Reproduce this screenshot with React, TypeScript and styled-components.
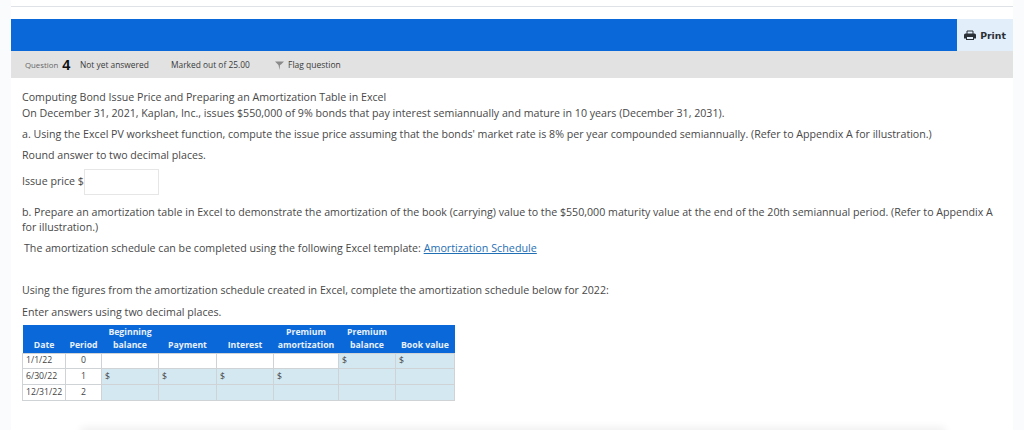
import styled, { createGlobalStyle } from 'styled-components';

const GlobalStyle = createGlobalStyle`
  html, body {
    margin: 0;
    padding: 0;
    height: 430px;
    overflow: hidden;
    background: #fafbfc;
    font-family: "Open Sans", "Liberation Sans", sans-serif;
    color: #484848;
  }
`;

const Page = styled.div`
  position: relative;
  width: 1002px;
  height: 430px;
  margin-left: 11px;
  background: #fff;
  overflow: hidden;
`;

const TopRule = styled.div`
  height: 6px;
  border-bottom: 1px solid #dfe2e6;
  margin-bottom: 12px;
`;

const HeaderBar = styled.div`
  display: flex;
  height: 32px;
`;

const BlueFill = styled.div`
  flex: 1;
  background: #0a68d8;
`;

const PrintButton = styled.div`
  width: 56px;
  display: flex;
  align-items: center;
  justify-content: center;
  gap: 4px;
  background: #e2eefa;
  color: #2b2f36;
  font-family: "DejaVu Sans", sans-serif;
  font-size: 9.3px;
  font-weight: 700;
`;

const InfoBar = styled.div`
  display: flex;
  align-items: center;
  height: 27px;
  background: #e2e2e2;
  padding-left: 14px;
  font-size: 8.4px;
  color: #3a3a3a;
`;

const QuestionLabel = styled.span`
  color: #666;
  width: 55px;
  font-size: 7.8px;
  display: flex;
  align-items: center;
  gap: 4px;
`;

const QuestionNumber = styled.b`
  font-family: "Liberation Sans", sans-serif;
  font-size: 14.5px;
  color: #111;
`;

const InfoItem = styled.span<{ $width: number }>`
  width: ${(p) => p.$width}px;
`;

const FlagItem = styled.span`
  display: flex;
  align-items: center;
  gap: 4px;
  font-size: 8.5px;
`;

const Content = styled.div`
  padding: 12px 16px 0 11px;
  font-size: 10.65px;
  line-height: 15.5px;
`;

const Para = styled.div<{ $mb?: number; $indent?: number }>`
  margin-bottom: ${(p) => p.$mb ?? 0}px;
  padding-left: ${(p) => p.$indent ?? 0}px;
`;

const AnswerRow = styled.div`
  display: flex;
  align-items: center;
  margin-bottom: 10px;
`;

const AnswerInput = styled.div`
  width: 75px;
  height: 26px;
  border: 1px solid #e6e6e6;
  box-sizing: border-box;
  background: #fff;
`;

const Link = styled.a`
  color: #1f6fb5;
  font-size: 10.75px;
  text-decoration: underline;
`;

const Table = styled.table`
  border-collapse: collapse;
  table-layout: fixed;
  width: 432px;
  font-size: 8.7px;
  line-height: 13px;
`;

const HeadCell = styled.th`
  background: #0a68d8;
  color: #e8f1fb;
  font-weight: 700;
  text-align: center;
  vertical-align: bottom;
  padding: 0 0 1px;
  height: 27px;
`;

const BodyRow = styled.tr<{ $height: number }>`
  height: ${(p) => p.$height}px;
`;

const Cell = styled.td<{ $fill?: boolean; $center?: boolean }>`
  background: ${(p) => (p.$fill ? '#d3e8f1' : '#fff')};
  border: 1px solid #cfd3d6;
  padding: 0 3px;
  text-align: ${(p) => (p.$center ? 'center' : 'left')};
  color: #444;
`;

const BottomShadow = styled.div`
  position: absolute;
  left: 70px;
  right: 68px;
  bottom: -8px;
  height: 8px;
  box-shadow: 0 -2px 8px rgba(0, 0, 0, 0.08);
`;

const columns = [43, 36, 57, 58, 57, 65, 57, 59];
const heads = [
  ['', 'Date'],
  ['', 'Period'],
  ['Beginning', 'balance'],
  ['', 'Payment'],
  ['', 'Interest'],
  ['Premium', 'amortization'],
  ['Premium', 'balance'],
  ['', 'Book value'],
];

// one entry per amount column: does the cell hold a $ / is it shaded
const rows = [
  { date: '1/1/22', period: '0', height: 15, cells: [[false, false], [false, false], [false, false], [false, false], [true, true], [true, true]] },
  { date: '6/30/22', period: '1', height: 16, cells: [[true, true], [true, true], [true, true], [true, true], [false, true], [false, true]] },
  { date: '12/31/22', period: '2', height: 16, cells: [[false, true], [false, true], [false, true], [false, true], [false, true], [false, true]] },
];

function PrinterIcon() {
  return (
    <svg width="12" height="10" viewBox="0 0 12 10" fill="none">
      <path d="M3 4V1h6v3" stroke="#2b2f36" strokeWidth="1" />
      <path d="M0 5a1.500 1.500 0 0 1 1.500-1.500h9A1.500 1.500 0 0 1 12 5v3.500H0z" fill="#2b2f36" />
      <rect x="2.500" y="6.500" width="7" height="3" fill="#e2eefa" stroke="#2b2f36" />
    </svg>
  );
}

function FlagIcon() {
  return (
    <svg width="9" height="10" viewBox="0 0 9 10">
      <path d="M0 1.500h9L6 4.500 5 5 4.500 10 3.500 5z" fill="#8a8a8a" />
    </svg>
  );
}

export default function App() {
  return (
    <>
      <GlobalStyle />
      <Page>
        <TopRule />
        <HeaderBar>
          <BlueFill />
          <PrintButton>
            <PrinterIcon />
            Print
          </PrintButton>
        </HeaderBar>
        <InfoBar>
          <QuestionLabel>
            Question <QuestionNumber>4</QuestionNumber>
          </QuestionLabel>
          <InfoItem $width={91}>Not yet answered</InfoItem>
          <InfoItem $width={104}>Marked out of 25.00</InfoItem>
          <FlagItem>
            <FlagIcon />
            Flag question
          </FlagItem>
        </InfoBar>
        <Content>
          <Para>Computing Bond Issue Price and Preparing an Amortization Table in Excel</Para>
          <Para $mb={5.5}>
            On December 31, 2021, Kaplan, Inc., issues $550,000 of 9% bonds that pay interest semiannually and mature in 10 years (December 31, 2031).
          </Para>
          <Para $mb={5.5}>
            a. Using the Excel PV worksheet function, compute the issue price assuming that the bonds' market rate is 8% per year compounded semiannually. (Refer to Appendix A for illustration.)
          </Para>
          <Para $mb={5.5}>Round answer to two decimal places.</Para>
          <AnswerRow>
            Issue price $<AnswerInput />
          </AnswerRow>
          <Para $mb={5.5}>
            b. Prepare an amortization table in Excel to demonstrate the amortization of the book (carrying) value to the $550,000 maturity value at the end of the 20th semiannual period. (Refer to Appendix A for illustration.)
          </Para>
          <Para $mb={26.5} $indent={2}>
            The amortization schedule can be completed using the following Excel template: <Link>Amortization Schedule</Link>
          </Para>
          <Para $mb={6}>Using the figures from the amortization schedule created in Excel, complete the amortization schedule below for 2022:</Para>
          <Para $mb={4.5}>Enter answers using two decimal places.</Para>
          <Table>
            <colgroup>
              {columns.map((w, i) => (
                <col key={i} width={w} />
              ))}
            </colgroup>
            <thead>
              <tr>
                {heads.map(([top, bottom]) => (
                  <HeadCell key={bottom}>
                    {top}
                    {top && <br />}
                    {bottom}
                  </HeadCell>
                ))}
              </tr>
            </thead>
            <tbody>
              {rows.map((row) => (
                <BodyRow key={row.date} $height={row.height}>
                  <Cell>{row.date}</Cell>
                  <Cell $center>{row.period}</Cell>
                  {row.cells.map(([dollar, fill], i) => (
                    <Cell key={i} $fill={fill}>
                      {dollar ? '$' : ''}
                    </Cell>
                  ))}
                </BodyRow>
              ))}
            </tbody>
          </Table>
        </Content>
        <BottomShadow />
      </Page>
    </>
  );
}
